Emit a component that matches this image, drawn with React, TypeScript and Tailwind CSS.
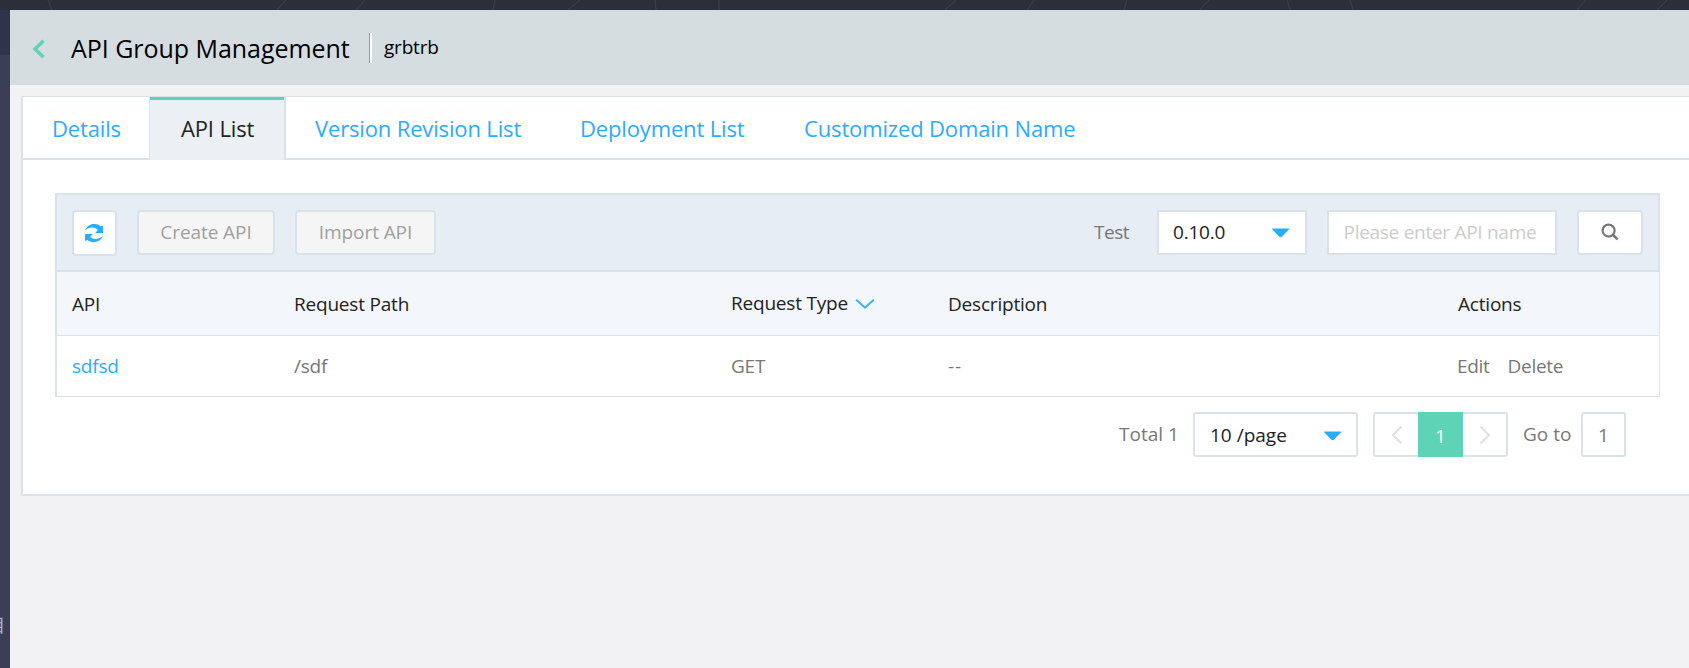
import type { ReactNode } from "react";

const topLines = [
  [48, 52], [286, 277], [365, 356], [495, 493], [580, 568], [655, 656], [719, 719],
  [956, 945], [1034, 1027], [1127, 1124], [1209, 1200], [1287, 1290], [1350, 1353],
  [1586, 1577], [1667, 1657],
];

function Caret() {
  return (
    <svg width="17" height="10" viewBox="0 0 17 10" className="mt-[1px] shrink-0">
      <path d="M0.6 0.5h16a.5.5 0 0 1 .3.9L10 8.600a2 2 0 0 1-2.800 0L.3 1.400a.5.5 0 0 1 .3-.9z" fill="#29adff" />
    </svg>
  );
}

function Tab({ children, className }: { children: ReactNode; className: string }) {
  return (
    <a className={"flex h-[61px] shrink-0 items-center whitespace-nowrap pt-[1px] text-[22px] tracking-[-0.15px] text-[#2eaaff] " + className}>
      {children}
    </a>
  );
}

function Arrow({ d }: { d: string }) {
  return (
    <svg width="12" height="20" viewBox="0 0 12 20" fill="none" stroke="#e0e0e0" strokeWidth="2">
      <path d={d} />
    </svg>
  );
}

export default function App() {
  return (
    <div className="flex h-[668px] w-full flex-col overflow-hidden bg-[#f2f2f4] font-['Open_Sans','Noto_Sans_CJK_SC',sans-serif] text-[19px] leading-none tracking-[-0.2px] text-[#777]">
      <div className="h-[10px] shrink-0 bg-[#2d2e3a]">
        <svg width="1689" height="10" stroke="#3c3d48" strokeWidth="1.3">
          {topLines.map(([a, b]) => <line key={a} x1={a} y1="0" x2={b} y2="10" />)}
        </svg>
      </div>
      <div className="flex flex-1">
        <aside className="flex w-[10px] shrink-0 flex-col bg-[#3a3f55]">
          <div className="h-[45px] bg-[#30344b]" />
          <div className="mt-[561px] flex h-[18px] w-[3px] justify-end overflow-hidden text-[18px] leading-[18px] text-[#a9b0cc]">
            <span className="-mr-[2px]">目</span>
          </div>
        </aside>
        <main className="flex min-w-0 flex-1 flex-col">
          <header className="flex h-[75px] shrink-0 items-center bg-[#d5dde0] pl-[22px] text-black">
            <svg width="14" height="20" viewBox="0 0 14 20" className="mt-[3px]" fill="none" stroke="#5ed3b5" strokeWidth="3.400">
              <path d="M11.600 1.800L3 10l8.600 8.200" />
            </svg>
            <h1 className="ml-[25px] w-[298px] whitespace-nowrap pt-[1px] text-[25px] tracking-[-0.04px]">API Group Management</h1>
            <div className="h-[30px] w-[3px] border-l border-[#999] bg-white" />
            <span className="ml-[12px] tracking-[-0.2px]">grbtrb</span>
          </header>

          <section className="ml-[11px] mt-[11px] flex h-[400px] flex-col border-b-2 border-l-2 border-[#d9e3e9] bg-white">
            <nav className="flex h-[64px] shrink-0 border-b-2 border-t border-[#d9e2e9]">
              <Tab className="w-[126px] pl-[29px]">Details</Tab>
              <div className="-mb-[2px] flex h-[63px] w-[137px] shrink-0 flex-col border-l border-r-2 border-[#d9e2e9] bg-[#ebf0f4]">
                <div className="h-[3px] bg-[#5ed3b5]" />
                <a className="flex h-[57px] items-center whitespace-nowrap pb-[1px] pl-[31px] text-[22px] tracking-[-0.15px] text-[#222]">API List</a>
              </div>
              <Tab className="w-[265px] pl-[29px]">Version Revision List</Tab>
              <Tab className="w-[225px] pl-[29px]">Deployment List</Tab>
              <Tab className="pl-[28px]">Customized Domain Name</Tab>
            </nav>

            <div className="ml-[32px] mt-[33px] w-[1605px]">
              <div className="flex h-[79px] items-start border-2 border-[#d9e2e9] bg-[#e6edf5] pl-[15px] pr-[15px] pt-[15px]">
                <button className="flex h-[46px] w-[45px] items-center justify-center rounded-[4px] border-2 border-[#d9e2e9] bg-white pr-[1px]">
                  <svg width="20" height="20" viewBox="0 0 20 20" fill="#29adff">
                    <path d="M1 7.400C3 2.800 6.500 1 10.500 1c2.700 0 4.500.8 6 2.200L19 2.800V10h-7.700l2.400-2.900C11.300 4 5.500 3.200 1 7.400z" />
                    <path d="M19 12.800c-2 4.600-5.500 6.400-9.500 6.400-2.700 0-4.500-.8-6-2.200L1 18V11h7.700l-2.400 2.700C8.700 16.600 14.500 17 19 12.800z" />
                  </svg>
                </button>
                <button className="ml-[20px] h-[45px] w-[138px] rounded-[4px] border-2 border-[#d9e2e9] bg-[#f5f5f5] tracking-[-0.08px] text-[#a0a0a0]">Create API</button>
                <button className="ml-[20px] h-[45px] w-[141px] rounded-[4px] border-2 border-[#d9e2e9] bg-[#f5f5f5] tracking-[-0.08px] text-[#a0a0a0]">Import API</button>
                <span className="ml-auto flex h-[45px] w-[63px] items-center tracking-[-0.45px]">Test</span>
                <div className="flex h-[45px] w-[150px] items-center justify-between border-2 border-[#d9e2e9] bg-white pl-[14px] pr-[16px] text-[#222]">
                  <span>0.10.0</span>
                  <Caret />
                </div>
                <input placeholder="Please enter API name" className="ml-[20px] h-[45px] w-[230px] border-2 border-[#d9e2e9] bg-white pb-[2px] pl-[14.500px] tracking-[-0.28px] placeholder:text-[#ccc]" />
                <button className="ml-[20px] flex h-[45px] w-[66px] items-center justify-center rounded-[4px] border-2 border-[#d9e2e9] bg-white">
                  <svg width="18" height="18" viewBox="0 0 18 18" fill="none" stroke="#777" className="-mt-[1px]">
                    <circle cx="7.600" cy="7.600" r="6" strokeWidth="2.200" />
                    <path d="M12 12l4.600 4.400" strokeWidth="2.600" />
                  </svg>
                </button>
              </div>

              <div className="border-b border-l-2 border-r border-[#d9e2e9]">
                <div className="grid h-[64px] grid-cols-[222px_437px_217px_509px_1fr] items-center border-b border-[#d9e2e9] bg-[#f3f6fb] pl-[15px] pt-[2px] text-[#222]">
                  <span>API</span>
                  <span>Request Path</span>
                  <span className="flex items-center pb-[2px]">
                    Request Type
                    <svg width="20" height="12" viewBox="0 0 20 12" fill="none" stroke="#3fb0ff" strokeWidth="2" className="ml-[7px]">
                      <path d="M1.200 1.700L10 9.700l8.800-8" />
                    </svg>
                  </span>
                  <span>Description</span>
                  <span className="pl-[1px]">Actions</span>
                </div>
                <div className="grid h-[60px] grid-cols-[222px_437px_217px_509px_1fr] items-center pl-[15px]">
                  <a className="text-[#2eaaff]">sdfsd</a>
                  <span>/sdf</span>
                  <span>GET</span>
                  <span className="tracking-[1px]">--</span>
                  <span className="flex gap-[18px] tracking-[-0.3px]"><a>Edit</a><a>Delete</a></span>
                </div>
              </div>

              <div className="mt-[15px] flex h-[45px] items-center justify-end pr-[34px] tracking-normal">
                <span className="w-[74px]">Total 1</span>
                <div className="flex h-[45px] w-[165px] items-center justify-between rounded-[3px] border-2 border-[#d9e2e9] bg-white pl-[15px] pr-[15px] pt-[2px] text-[#222]">
                  <span>10 /page</span>
                  <Caret />
                </div>
                <div className="ml-[15px] flex h-[45px] w-[135px]">
                  <button className="flex w-[45px] items-center justify-center rounded-l-[3px] border-2 border-r-0 border-[#d9e2e9]"><Arrow d="M10.500 1.500L2 10l8.500 8.500" /></button>
                  <button className="w-[45px] bg-[#5ed3b5] pt-[3px] text-white">1</button>
                  <button className="flex w-[45px] items-center justify-center rounded-r-[3px] border-2 border-l-0 border-[#d9e2e9]"><Arrow d="M1.500 1.500L10 10l-8.500 8.500" /></button>
                </div>
                <span className="ml-[15px] w-[58px]">Go to</span>
                <div className="flex h-[45px] w-[45px] items-center justify-center rounded-[3px] border-2 border-[#d9e2e9] pt-[1px]">1</div>
              </div>
            </div>
          </section>
        </main>
      </div>
    </div>
  );
}
